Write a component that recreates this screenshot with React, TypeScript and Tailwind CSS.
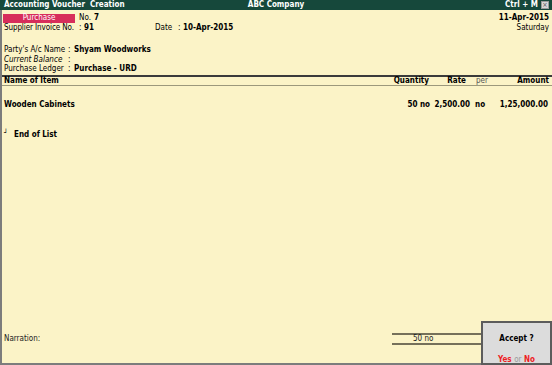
import React from "react";

function Field({ label, value, italic }: { label: string; value?: string; italic?: boolean }) {
  return (
    <div className="flex h-[10px] items-center">
      <span className={`w-[64px] ${italic ? "italic" : ""}`}>{label}</span>
      <span className="w-[6px]">:</span>
      {value && <span className="font-bold">{value}</span>}
    </div>
  );
}

export default function App() {
  return (
    <div className="flex h-[365px] w-[552px] flex-col whitespace-nowrap bg-[#fbf3c7] font-['DejaVu_Sans_Condensed','DejaVu_Sans',sans-serif] text-[8px] leading-none text-black font-stretch-condensed">
      {/* title bar */}
      <div className="relative flex h-[10px] items-center bg-[#16483b] pl-[4px] pr-[3px] font-bold text-white">
        <span>Accounting Voucher&nbsp; Creation</span>
        <span className="absolute left-1/2 -translate-x-1/2">ABC Company</span>
        <div className="ml-auto flex items-center gap-[3px]">
          <span>Ctrl + M</span>
          <span className="flex h-[8px] w-[8px] items-center justify-center border border-[#9a9a9a] bg-[#d8d8d8] text-[7px] font-normal text-[#555]">
            ×
          </span>
        </div>
      </div>

      {/* voucher body */}
      <div className="relative flex flex-1 flex-col border-b-2 border-l-2 border-[#7c7c7c]">
        <div className="mt-[3px] flex h-[10px] items-center pr-[3px]">
          <span className="ml-[1px] flex h-[9px] w-[72px] items-center justify-center bg-[#d72d5b] text-white">Purchase</span>
          <span className="ml-[4px]">No.</span>
          <span className="ml-[3px] font-bold">7</span>
          <span className="ml-auto font-bold">11-Apr-2015</span>
        </div>
        <div className="flex h-[10px] items-center pl-[2px] pr-[3px]">
          <span className="w-[75px] tracking-[-0.1px]">Supplier Invoice No.</span>
          <span className="w-[5px]">:</span>
          <span className="w-[71px] font-bold">91</span>
          <span className="w-[23px]">Date</span>
          <span className="w-[5px]">:</span>
          <span className="font-bold">10-Apr-2015</span>
          <span className="ml-auto">Saturday</span>
        </div>

        <div className="mt-[12px] pl-[2px]">
          <Field label="Party's A/c Name" value="Shyam Woodworks" />
          <div className="h-[9px]">
            <Field label="Current Balance" italic />
          </div>
          <Field label="Purchase Ledger" value="Purchase - URD" />
        </div>

        {/* table header */}
        <div className="mt-[1px] flex h-[11px] items-center border-t-2 border-b border-t-[#3a3a3a] border-b-[#9c987c] pl-[2px] pr-[3px] font-bold">
          <span className="flex-1">Name of Item</span>
          <span className="w-[60px] text-right">Quantity</span>
          <span className="w-[37px] text-right">Rate</span>
          <span className="ml-[10px] w-[13px] font-normal text-[#555]">per</span>
          <span className="w-[60px] text-right">Amount</span>
        </div>

        <div className="mt-[14px] flex h-[10px] items-center pl-[2px] pr-[4px] font-bold">
          <span className="flex-1">Wooden Cabinets</span>
          <span className="w-[60px] text-right">50 no</span>
          <span className="w-[40px] text-right">2,500.00</span>
          <span className="ml-[5px] w-[13px]">no</span>
          <span className="w-[60px] text-right">1,25,000.00</span>
        </div>

        <div className="mt-[20px] flex h-[10px] items-center pl-[2px] font-bold">
          <span className="w-[10px] -translate-y-[2px] text-[7px]">┘</span>
          <span>End of List</span>
        </div>

        <div className="flex-1" />

        {/* narration */}
        <div className="mb-[18px] flex h-[12px] items-center pl-[2px]">
          <span className="w-[388px] text-[#222]">Narration:</span>
          <div className="flex h-[12px] w-[92px] items-center border-y-2 border-[#75705a] pl-[21px] text-[#222]">50 no</div>
        </div>

        {/* accept popup */}
        <div className="absolute -bottom-[2px] right-0 flex h-[44px] w-[71px] flex-col items-center border-2 border-[#5c5c5c] bg-[#dcdcdc] font-bold">
          <span className="mt-[12px]">Accept ?</span>
          <span className="mt-[13px] text-[#ee1c25]">
            Yes <span className="font-normal text-[#9a9a9a]">or</span> No
          </span>
        </div>
      </div>
    </div>
  );
}
